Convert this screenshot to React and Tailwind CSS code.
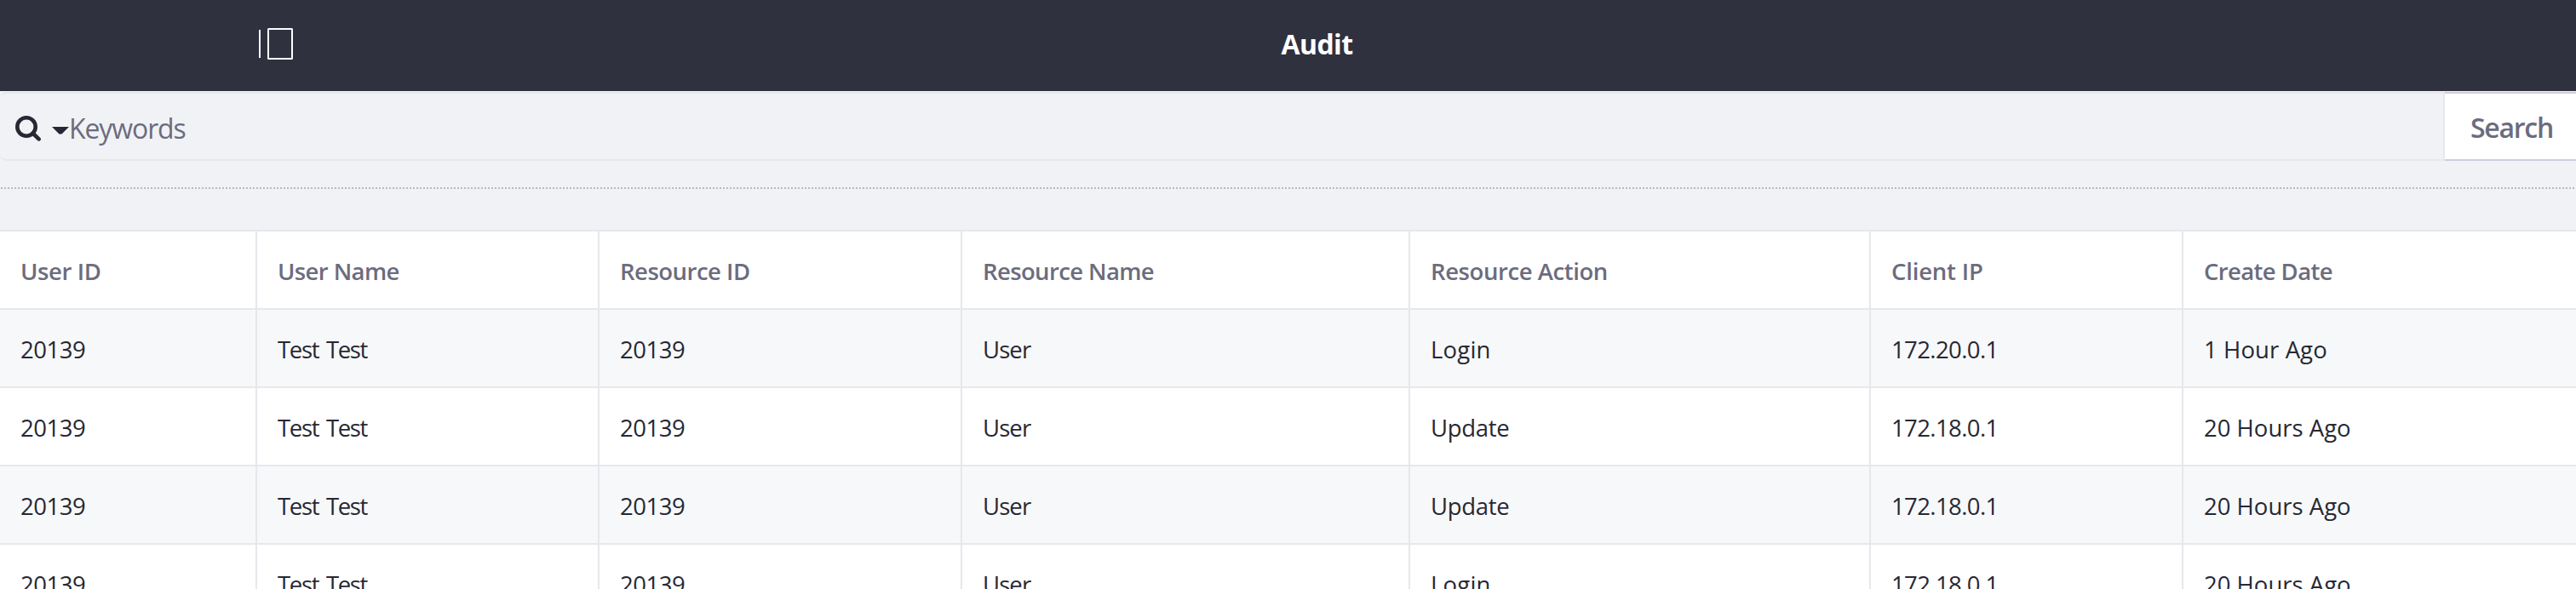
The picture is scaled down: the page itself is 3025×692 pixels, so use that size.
const columns = [
  { label: "User ID", width: "w-[300px]", tracking: "tracking-[-0.38px]" },
  { label: "User Name", width: "w-[402px]", tracking: "tracking-[-0.6px]" },
  { label: "Resource ID", width: "w-[426px]", tracking: "tracking-[-0.5px]" },
  { label: "Resource Name", width: "w-[526px]", tracking: "tracking-[-0.62px]" },
  { label: "Resource Action", width: "w-[541px]", tracking: "tracking-[-0.42px]" },
  { label: "Client IP", width: "w-[367px]", tracking: "tracking-[-0.2px]" },
  { label: "Create Date", width: "w-[463px]", tracking: "tracking-[-0.62px]" },
];

const rows = [
  ["20139", "Test Test", "20139", "User", "Login", "172.20.0.1", "1 Hour Ago"],
  ["20139", "Test Test", "20139", "User", "Update", "172.18.0.1", "20 Hours Ago"],
  ["20139", "Test Test", "20139", "User", "Update", "172.18.0.1", "20 Hours Ago"],
  ["20139", "Test Test", "20139", "User", "Login", "172.18.0.1", "20 Hours Ago"],
];

const cellTracking = {
  "20139": "tracking-[-0.5px]",
  "Test Test": "tracking-[-1.35px] [word-spacing:3px]",
  User: "tracking-[-0.9px]",
  Login: "tracking-[0.2px]",
  Update: "tracking-[-0.3px]",
  "172.20.0.1": "tracking-[-0.6px]",
  "172.18.0.1": "tracking-[-0.6px]",
  "1 Hour Ago": "tracking-[0.1px]",
  "20 Hours Ago": "tracking-normal",
};

function SidebarIcon() {
  return (
    <svg className="h-[37px] w-10" viewBox="0 0 40 37" fill="none" stroke="#fff" strokeWidth="2">
      <path d="M1 2v33" />
      <rect x="11" y="1" width="28" height="35" rx="0.5" />
    </svg>
  );
}

function SearchIcon() {
  return (
    <svg className="h-[30px] w-[30px]" viewBox="0 0 30 30" fill="none" stroke="#272833">
      <circle cx="13" cy="13" r="10.7" strokeWidth="4.6" />
      <path d="M20.500 20.500 27.600 27.400" strokeWidth="4.600" strokeLinecap="round" />
    </svg>
  );
}

function Header() {
  return (
    <header className="grid h-[107px] shrink-0 grid-cols-3 items-center bg-[#30313f] pb-1">
      <button className="ml-[304px] w-10" aria-label="Toggle sidebar">
        <SidebarIcon />
      </button>
      <h1 className="pt-px pl-[68px] text-center text-[32px] leading-none font-bold tracking-[-0.6px] text-white">
        Audit
      </h1>
    </header>
  );
}

function SearchBar() {
  return (
    <form className="mt-px flex h-[81px] shrink-0">
      <div className="flex grow items-center rounded-l-lg border-2 border-l-0 border-[#e7e7ed] pt-[5px] pl-[18px]">
        <SearchIcon />
        <svg className="mt-1 ml-[13px] h-[9px] w-5" viewBox="0 0 20 9" fill="#272833">
          <path d="M0 0h20l-8.500 8.500h-3z" />
        </svg>
        <span className="text-[32px] leading-none tracking-[-1.1px] text-[#6b6c7e]">
          Keywords
        </span>
      </div>
      <button
        type="button"
        className="w-[154px] border-y-2 border-[#cdced9] bg-white pt-[3px] pl-[30px] text-left text-[32px] leading-none font-semibold tracking-[-1.26px] text-[#6b6c7e]"
      >
        Search
      </button>
    </form>
  );
}

function AuditTable() {
  return (
    <div className="border-t-2 border-[#e7e7ed] bg-white text-[27.5px] leading-none">
      <div className="flex h-[92px] border-b-2 border-[#e7e7ed] font-semibold text-[#6b6c7e]">
        {columns.map((c, i) => (
          <div
            key={c.label}
            className={`flex shrink-0 items-center border-[#e7e7ed] pt-[3px] pl-6 ${i ? "border-l-2" : ""} ${c.width} ${c.tracking}`}
          >
            {c.label}
          </div>
        ))}
      </div>
      {rows.map((row, r) => (
        <div key={r} className="flex h-[92px] border-b-2 border-[#e7e7ed] text-[#272833] odd:bg-white even:bg-[#f7f8f9]">
          {row.map((value, i) => (
            <div
              key={i}
              className={`flex shrink-0 items-center border-[#e7e7ed] pt-[3px] pl-6 ${i ? "border-l-2" : ""} ${columns[i].width} ${cellTracking[value]}`}
            >
              {value}
            </div>
          ))}
        </div>
      ))}
    </div>
  );
}

export default function App() {
  return (
    <div className="flex h-[692px] w-[3025px] flex-col overflow-hidden bg-[#f1f2f5] font-['Open_Sans','Noto_Sans',sans-serif]">
      <Header />
      <SearchBar />
      <svg className="mt-[31px] mb-12 h-0.5 w-full shrink-0">
        <line x1="1" y1="1" x2="3025" y2="1" stroke="#bababd" strokeWidth="2" strokeDasharray="2 2" />
      </svg>
      <AuditTable />
    </div>
  );
}
